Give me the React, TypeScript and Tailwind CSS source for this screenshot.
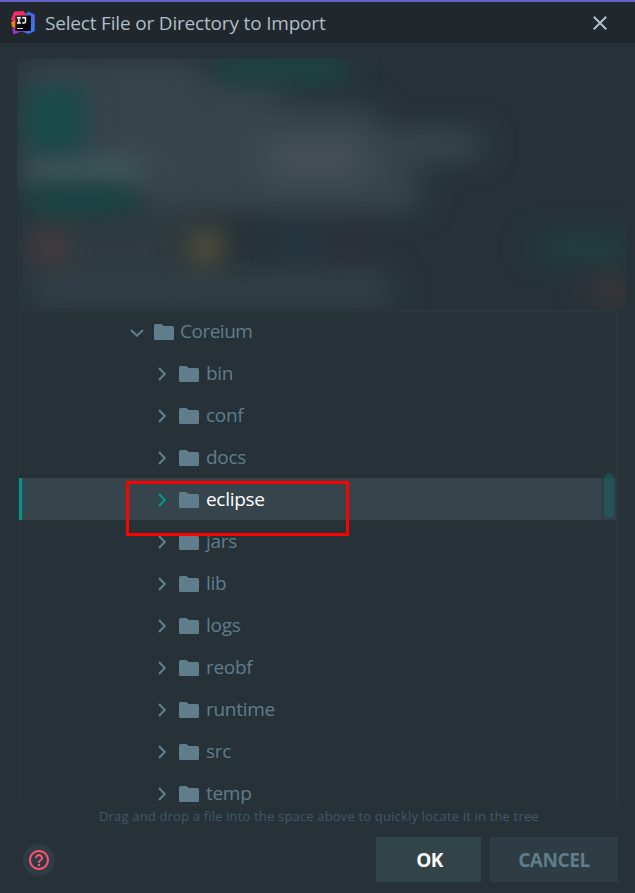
import React from 'react';

const FOLDERS = ['bin', 'conf', 'docs', 'eclipse', 'jars', 'lib', 'logs', 'reobf', 'runtime', 'src', 'temp'];

const FONT = "font-['Open_Sans','Noto_Sans',sans-serif] whitespace-nowrap";

function Folder() {
  return (
    <svg width="20" height="16" viewBox="0 0 20 16" className="shrink-0 text-[#607d8b]">
      <path d="M1.6 0H7.4L9.6 2H18.4Q20 2 20 3.6V14.4Q20 16 18.4 16H1.6Q0 16 0 14.4V1.6Q0 0 1.6 0Z" fill="currentColor" />
    </svg>
  );
}

function IdeaLogo() {
  return (
    <svg width="24" height="24" viewBox="0 0 24 24" className="shrink-0">
      <defs>
        <linearGradient id="pink" x1="0" y1="0" x2="1" y2="1">
          <stop offset="0" stopColor="#fc3162" /><stop offset="1" stopColor="#e5256b" />
        </linearGradient>
        <linearGradient id="blue" x1="0" y1="0" x2="0.6" y2="1">
          <stop offset="0" stopColor="#3b6be0" /><stop offset="0.6" stopColor="#5362dc" /><stop offset="1" stopColor="#2f7df0" />
        </linearGradient>
        <linearGradient id="tile" x1="0" y1="0" x2="1" y2="1">
          <stop offset="0" stopColor="#3b3b3d" /><stop offset="0.6" stopColor="#000" />
        </linearGradient>
      </defs>
      <path d="M14 3L17.3 .4L23.8 3.6V20L17.5 23L11 20.5Z" fill="url(#blue)" />
      <path d="M3.2 .5L12.6 0L15.5 4.5L8 14L0 8.5Z" fill="url(#pink)" />
      <path d="M0 11L5 9V17.5L1 15.8Z" fill="#f97a12" />
      <path d="M1.2 16.5L8 17.5L14 20.5L9.5 20.8L2.3 23.5Z" fill="#9a35c8" />
      <rect x="4.3" y="4.5" width="15.5" height="15.5" fill="url(#tile)" />
      <path d="M6 6.7H9.8M7.9 6.7V12M6 12H9.8M11.3 6.7H14.5V10.7Q14.5 12 13 12H11.2" stroke="#fff" strokeWidth="1.4" fill="none" />
      <path d="M6.2 17.5H12" stroke="#ddd" strokeWidth="1" />
    </svg>
  );
}

function BlurredPreview() {
  return (
    <svg width="610" height="251" viewBox="17 58 610 251" className="ml-[17px] block shrink-0 bg-[#263238]">
      <defs>
        <filter id="soft" x="-200" y="-200" width="1100" height="800" filterUnits="userSpaceOnUse" colorInterpolationFilters="sRGB">
          <feGaussianBlur stdDeviation="16 13" />
        </filter>
        <filter id="fine" x="-200" y="-200" width="1100" height="800" filterUnits="userSpaceOnUse" colorInterpolationFilters="sRGB">
          <feGaussianBlur stdDeviation="14 12" />
        </filter>
      </defs>
      <g filter="url(#soft)">
        <path d="M20 60H205V78H280V104H375V128H480V162H415V184H420V212H140V190H20Z" fill="#38444b" />
        <rect x="265" y="135" width="100" height="48" fill="#434e56" />
        <rect x="25" y="158" width="120" height="28" fill="#3f595d" />
        <rect x="30" y="270" width="360" height="40" fill="#333f47" />
        <rect x="24" y="215" width="160" height="60" fill="#2f3b41" />
        <rect x="285" y="230" width="30" height="28" fill="#223943" />
        <rect x="330" y="231" width="30" height="26" fill="#312f38" />
        <rect x="538" y="234" width="95" height="26" fill="#1f4040" />
        <rect x="594" y="276" width="32" height="28" fill="#42383a" />
      </g>
      <g filter="url(#fine)">
        <rect x="26" y="86" width="60" height="66" fill="#174a49" />
        <rect x="216" y="54" width="132" height="32" fill="#1d4442" />
        <rect x="28" y="188" width="108" height="25" fill="#194745" />
        <rect x="36" y="230" width="28" height="34" fill="#4b393d" />
        <rect x="190" y="229" width="31" height="36" fill="#57523e" />
      </g>
    </svg>
  );
}

function Row({ name, selected }: { name: string; selected: boolean }) {
  return (
    <div className={`flex h-[42px] shrink-0 items-center ${selected ? 'bg-[#36454b] text-white' : 'text-[#607d8b]'}`}>
      <div className={`h-full w-[3px] shrink-0 ${selected ? 'bg-[#009688]' : ''}`} />
      <svg width="8" height="14" viewBox="0 0 8 14" className={`ml-[136px] mt-px shrink-0 ${selected ? 'text-[#009688]' : 'text-[#607d8b]'}`}>
        <path d="M1 1L6.7 7L1 13" stroke="currentColor" strokeWidth="2.1" fill="none" />
      </svg>
      <div className="ml-[13px] mt-px"><Folder /></div>
      <span className={`${FONT} ml-[7px] text-[19px] leading-7 tracking-[-0.3px]`}>{name}</span>
      {selected && <div className="ml-auto h-full w-[15px] bg-[#303e45]" />}
    </div>
  );
}

export default function App() {
  return (
    <div className="flex h-[893px] w-[635px] flex-col overflow-hidden bg-[#263238]">
      <header className="flex h-[43px] shrink-0 items-center border-t-2 border-[#6360c8] bg-[#20272d] pl-[11px] text-[#b0bec5]">
        <IdeaLogo />
        <h1 className={`${FONT} ml-[10px] mt-px text-[19px] leading-7 tracking-[-0.18px]`}>Select File or Directory to Import</h1>
        <svg width="14" height="14" viewBox="0 0 14 14" className="ml-auto mr-[28px] mt-px">
          <path d="M.8 .8L13.2 13.2M13.2 .8L.8 13.2" stroke="currentColor" strokeWidth="2" />
        </svg>
      </header>

      <div className="h-[15px] shrink-0" />
      <BlurredPreview />

      <div className="relative ml-[18px] mt-px h-[495px] w-[600px] shrink-0">
        <div className="flex h-full flex-col overflow-hidden border-b border-l border-r-2 border-t-2 border-[#2a373e]">
          <div className="flex h-10 shrink-0 items-center pl-[111px] text-[#607d8b]">
            <svg width="14" height="8" viewBox="0 0 14 8" className="mt-px shrink-0">
              <path d="M1 1L7 6.7L13 1" stroke="currentColor" strokeWidth="2.1" fill="none" />
            </svg>
            <div className="ml-[10px]"><Folder /></div>
            <span className={`${FONT} mb-[2px] ml-[6px] text-[19px] leading-7 tracking-[-0.5px]`}>Coreium</span>
          </div>
          {FOLDERS.map((name) => <Row key={name} name={name} selected={name === 'eclipse'} />)}
        </div>
        <div className="absolute right-[4px] top-[163px] h-[45px] w-[10px] rounded-full bg-[#009688]/25" />
        <div className="absolute left-[108px] top-[171px] h-[55px] w-[223px] border-[3px] border-[#ff0000]" />
      </div>

      <p className={`${FONT} h-[32px] shrink-0 pl-[99px] text-[13px] leading-[23px] tracking-[0.17px] text-[#415967]`}>
        Drag and drop a file into the space above to quickly locate it in the tree
      </p>

      <footer className="flex shrink-0 items-center pl-[23px] pr-[17px]">
        <div className="flex size-8 items-center justify-center rounded-full bg-[#2e3c43]">
          <svg width="24" height="24" viewBox="0 0 24 24" className="text-[#ff5370]">
            <path fill="currentColor" d="M11 18h2v-2h-2v2zm1-16C6.48 2 2 6.48 2 12s4.48 10 10 10 10-4.48 10-10S17.52 2 12 2zm0 18c-4.41 0-8-3.59-8-8s3.59-8 8-8 8 3.59 8 8-3.59 8-8 8zm0-14c-2.21 0-4 1.79-4 4h2c0-1.1.9-2 2-2s2 .9 2 2c0 2-3 1.75-3 5h2c0-2.25 3-2.5 3-5 0-2.21-1.79-4-4-4z" />
          </svg>
        </div>
        <button className={`${FONT} ml-auto h-[45px] w-[105px] bg-[#314549] pl-[2px] pt-px text-[19px] font-bold tracking-[-0.5px] text-white`}>OK</button>
        <button className={`${FONT} ml-[9px] h-[45px] w-[128px] bg-[#2e3c43] pt-px text-[19px] font-bold tracking-[-0.4px] text-[#607d8b]`}>CANCEL</button>
      </footer>
    </div>
  );
}
